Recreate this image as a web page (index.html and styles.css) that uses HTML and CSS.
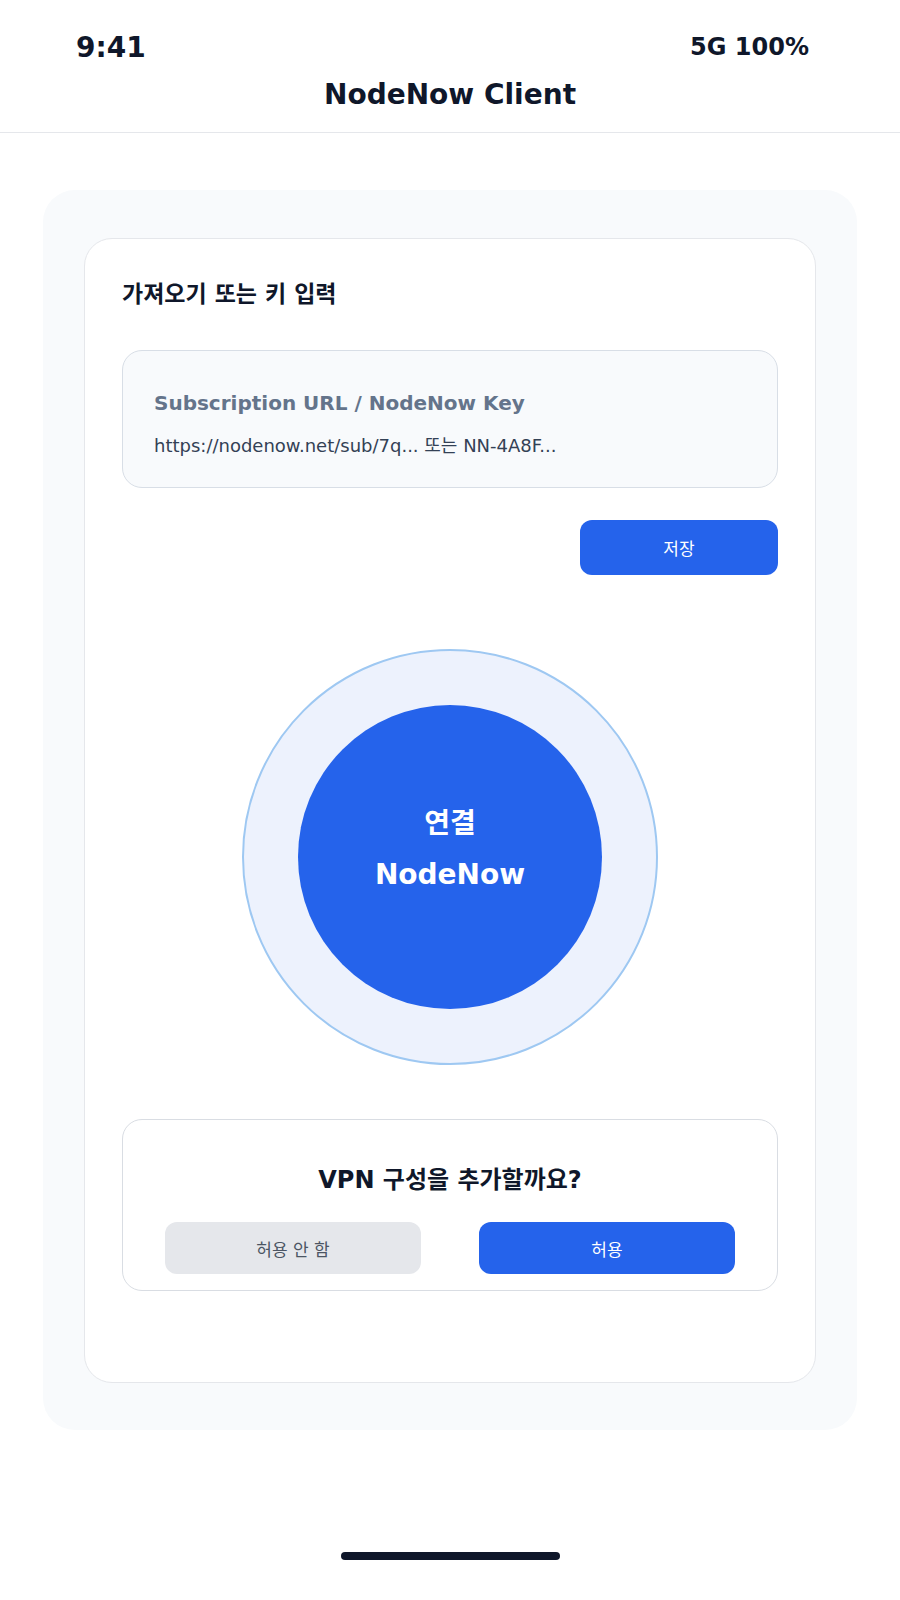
FILE: index.html
```html
<!DOCTYPE html>
<html lang="ko">
<head>
<meta charset="utf-8">
<title>NodeNow Client</title>
<link rel="stylesheet" href="styles.css">
</head>
<body>
<div class="screen">
  <header class="topbar">
    <div class="status">
      <span class="time">9:41</span>
      <span class="sys">5G 100%</span>
    </div>
    <h1 class="title">NodeNow Client</h1>
  </header>
  <main class="main">
    <section class="panel">
      <div class="card">
        <h2 class="heading">가져오기 또는 키 입력</h2>
        <div class="field">
          <div class="field-label">Subscription URL / NodeNow Key</div>
          <div class="field-value">https://nodenow.net/sub/7q... 또는 NN-4A8F...</div>
        </div>
        <div class="actions">
          <button class="btn btn-primary save">저장</button>
        </div>
        <div class="ring-wrap">
          <div class="ring">
            <button class="connect">
              <span class="connect-ko">연결</span>
              <span class="connect-en">NodeNow</span>
            </button>
          </div>
        </div>
        <div class="dialog">
          <div class="dialog-title">VPN 구성을 추가할까요?</div>
          <div class="dialog-buttons">
            <button class="btn btn-muted">허용 안 함</button>
            <button class="btn btn-primary">허용</button>
          </div>
        </div>
      </div>
    </section>
  </main>
  <div class="home-bar"><span class="home-indicator"></span></div>
</div>
</body>
</html>
```
FILE: styles.css
```css
* { box-sizing: border-box; }
html, body { margin: 0; padding: 0; background: #ffffff; }
body {
  font-family: "DejaVu Sans", "Noto Sans CJK KR", sans-serif;
  color: #0f172a;
}
.screen {
  width: 900px;
  height: 1600px;
  display: flex;
  flex-direction: column;
}
.topbar {
  padding: 30px 0 20px;
  border-bottom: 1px solid #e5e7eb;
}
.status {
  display: flex;
  justify-content: space-between;
  align-items: center;
  padding: 0 91px 0 76px;
  height: 34px;
  font-weight: bold;
}
.time { font-size: 28px; }
.sys { font-size: 24px; }
.title {
  margin: 14px 0 0;
  text-align: center;
  font-size: 28px;
  line-height: 34px;
  font-weight: bold;
}
.main {
  padding: 57px 43px 0;
}
.panel {
  background: #f8fafc;
  border-radius: 32px;
  padding: 48px 41px 47px;
}
.card {
  background: #ffffff;
  border: 1px solid #e5e7eb;
  border-radius: 28px;
  padding: 41px 37px 91px;
}
.heading {
  margin: 0;
  font-size: 23px;
  line-height: 28px;
  font-weight: bold;
}
.field {
  margin-top: 42px;
  background: #f8fafc;
  border: 1px solid #d8dee6;
  border-radius: 20px;
  padding: 40px 31px 29px;
  height: 138px;
}
.field-label {
  font-size: 20px;
  line-height: 24px;
  font-weight: bold;
  color: #64748b;
}
.field-value {
  margin-top: 19px;
  font-size: 18px;
  line-height: 24px;
  color: #334155;
}
.actions {
  margin-top: 32px;
  display: flex;
  justify-content: flex-end;
}
.btn {
  font-family: inherit;
  border: none;
  border-radius: 12px;
  font-size: 17px;
  cursor: pointer;
}
.btn-primary { background: #2563eb; color: #ffffff; }
.btn-muted { background: #e5e7eb; color: #4b5563; }
.save {
  width: 198px;
  height: 55px;
}
.ring-wrap {
  margin-top: 74px;
  display: flex;
  justify-content: center;
}
.ring {
  width: 416px;
  height: 416px;
  border-radius: 50%;
  background: #edf2fd;
  border: 2px solid #9ec8f2;
  display: flex;
  align-items: center;
  justify-content: center;
}
.connect {
  width: 304px;
  height: 304px;
  border-radius: 50%;
  border: none;
  background: #2563eb;
  color: #ffffff;
  font-family: inherit;
  font-weight: bold;
  display: flex;
  flex-direction: column;
  align-items: center;
  justify-content: center;
  gap: 16px;
  padding: 0 0 17px;
}
.connect-ko { font-size: 28px; line-height: 36px; }
.connect-en { font-size: 28px; line-height: 34px; }
.dialog {
  margin-top: 54px;
  border: 1px solid #d9dde3;
  border-radius: 20px;
  padding: 45px 42px 16px;
}
.dialog-title {
  text-align: center;
  font-size: 24px;
  line-height: 30px;
  font-weight: bold;
}
.dialog-buttons {
  margin-top: 27px;
  display: grid;
  grid-template-columns: 1fr 1fr;
  gap: 58px;
}
.dialog-buttons .btn { height: 52px; }
.home-bar {
  margin-top: auto;
  height: 48px;
  display: flex;
  justify-content: center;
}
.home-indicator {
  width: 219px;
  height: 8px;
  border-radius: 4px;
  background: #0f172a;
}
```
